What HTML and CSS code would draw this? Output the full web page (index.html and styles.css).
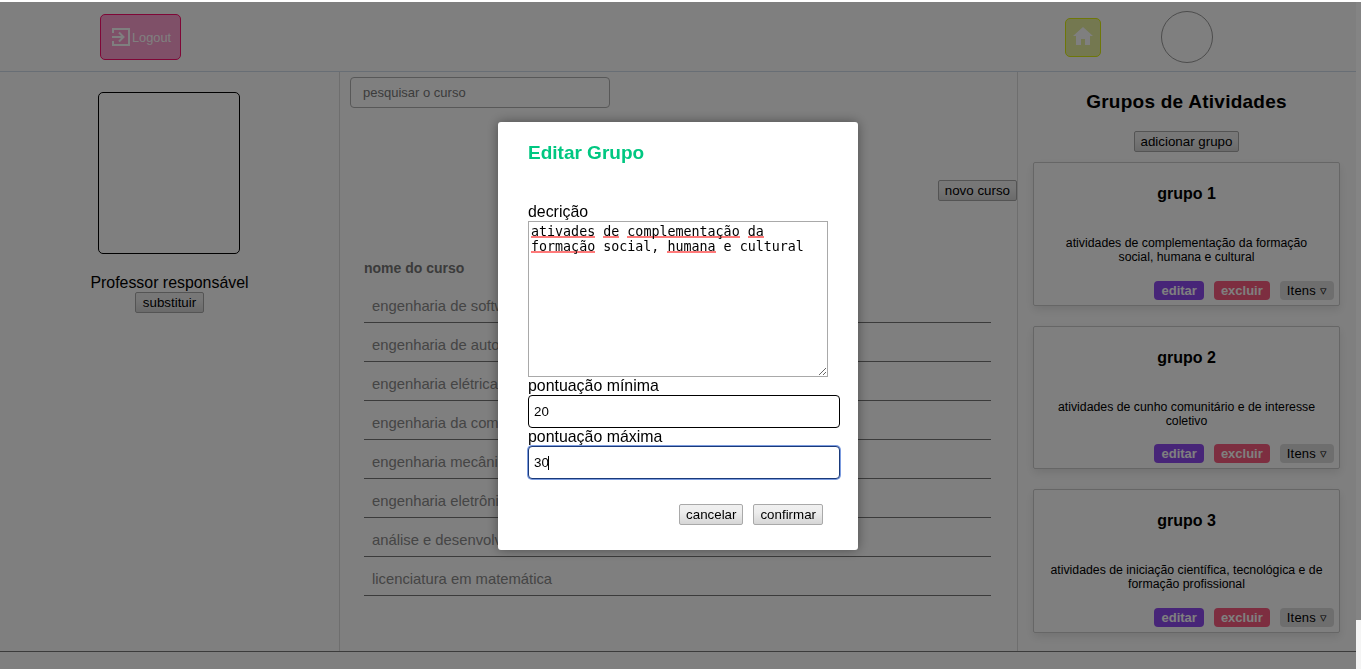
FILE: index.html
```html
<!DOCTYPE html>
<html>
  <head>
    <meta name="viewport" content="width=device-width, initial-scale=1.0" />
    <title>Editar Grupo</title>
    <link rel="stylesheet" href="styles.css">
  </head>
  <body>
    <div class="page">
      <header class="topbar">
        <div class="topbar-left">
          <button class="logout-button">
            <svg class="logout-icon" width="20" height="20" viewBox="0 0 20 20" fill="none" stroke="#fff" stroke-width="2">
              <path d="M2 6V2h16v16H2v-4" />
              <path d="M1 10h11M8 5.500l4.500 4.500-4.500 4.500" />
            </svg>
            Logout
          </button>
        </div>
        <div class="topbar-right">
          <button class="home-button">
            <svg width="20" height="18" viewBox="0 0 20 18" fill="#fff">
              <path d="M10 0L0 9h3v9h5v-6h4v6h5V9h3z" />
            </svg>
          </button>
          <div class="avatar"></div>
        </div>
      </header>

      <main class="columns">
        <aside class="teacher-col">
          <div class="teacher-photo"></div>
          <div class="teacher-label">Professor responsável</div>
          <button class="plain-button">substituir</button>
        </aside>

        <section class="course-col">
          <input class="search-input" type="text" placeholder="pesquisar o curso" />
          <div class="new-course-row">
            <button class="plain-button">novo curso</button>
          </div>
          <div class="course-list">
            <div class="course-head">nome do curso</div>
            <div class="course-row">engenharia de software</div>
            <div class="course-row">engenharia de automação</div>
            <div class="course-row">engenharia elétrica-eletrônica</div>
            <div class="course-row">engenharia da computação</div>
            <div class="course-row">engenharia mecânica</div>
            <div class="course-row">engenharia eletrônica</div>
            <div class="course-row">análise e desenvolvimento de sistemas</div>
            <div class="course-row">licenciatura em matemática</div>
          </div>
        </section>

        <aside class="groups-col">
          <h2 class="groups-title">Grupos de Atividades</h2>
          <button class="plain-button add-group">adicionar grupo</button>

          <div class="group-card">
            <h3 class="group-name">grupo 1</h3>
            <p class="group-text">atividades de complementação da formação social, humana e cultural</p>
            <div class="group-actions">
              <span class="tag tag-edit">editar</span>
              <span class="tag tag-delete">excluir</span>
              <span class="tag tag-items">Itens ▿</span>
            </div>
          </div>

          <div class="group-card">
            <h3 class="group-name">grupo 2</h3>
            <p class="group-text">atividades de cunho comunitário e de interesse coletivo</p>
            <div class="group-actions">
              <span class="tag tag-edit">editar</span>
              <span class="tag tag-delete">excluir</span>
              <span class="tag tag-items">Itens ▿</span>
            </div>
          </div>

          <div class="group-card">
            <h3 class="group-name">grupo 3</h3>
            <p class="group-text">atividades de iniciação científica, tecnológica e de formação profissional</p>
            <div class="group-actions">
              <span class="tag tag-edit">editar</span>
              <span class="tag tag-delete">excluir</span>
              <span class="tag tag-items">Itens ▿</span>
            </div>
          </div>
        </aside>
      </main>

      <footer class="bottom-line"></footer>
    </div>

    <div class="overlay"></div>
    <div class="gutter"></div>
    <div class="corner-patch"></div>

    <div class="modal">
      <h2 class="modal-title">Editar Grupo</h2>
      <label class="modal-label">decrição</label>
      <div class="modal-textarea"><span class="typo">ativades</span> <span class="typo">de</span> <span class="typo">complementação</span> <span class="typo">da</span> <span class="typo">formação</span> social, <span class="typo">humana</span> e cultural</div>
      <label class="modal-label">pontuação mínima</label>
      <input class="modal-input" type="text" value="20" />
      <label class="modal-label">pontuação máxima</label>
      <div class="input-wrap">
        <input class="modal-input is-focused" type="text" value="30" />
        <span class="caret"></span>
      </div>
      <div class="modal-actions">
        <button class="plain-button modal-button">cancelar</button>
        <button class="plain-button modal-button">confirmar</button>
      </div>
    </div>
  </body>
</html>
```

FILE: styles.css
```css
* {
  box-sizing: border-box;
}

html,
body {
  height: 100%;
  margin: 0;
  overflow: hidden;
}

body {
  font-family: "Liberation Sans", Arial, sans-serif;
  background-color: #fff;
  color: #000;
}

.page {
  width: 1356px;
  height: 669px;
  display: flex;
  flex-direction: column;
  padding-top: 2px;
}

.topbar {
  height: 70px;
  flex: none;
  display: flex;
  justify-content: space-between;
  border-bottom: 1px solid #d0dcea;
}

.topbar-left {
  padding: 12px 0 0 100px;
}

.logout-button {
  width: 81px;
  height: 46px;
  display: flex;
  align-items: center;
  gap: 1px;
  padding: 0 0 0 10px;
  background-color: #ffa0d0;
  border: 1px solid #ff0f6e;
  border-radius: 5px;
  color: #fff;
  font-family: inherit;
  font-size: 12.8px;
}

.topbar-right {
  display: flex;
  align-items: flex-start;
  padding: 9px 143px 0 0;
}

.home-button {
  width: 36px;
  height: 39px;
  margin: 7px 60px 0 0;
  padding: 0;
  background-color: #e8f0a0;
  border: 1px solid #dcef10;
  border-radius: 5px;
}

.avatar {
  width: 52px;
  height: 52px;
  border: 1px solid #999;
  border-radius: 50%;
}

.columns {
  flex: 1;
  min-height: 0;
  display: flex;
}

.teacher-col {
  width: 340px;
  flex: none;
  display: flex;
  flex-direction: column;
  align-items: center;
  border-right: 1px solid #ddd;
  padding-top: 20px;
}

.teacher-photo {
  width: 142px;
  height: 162px;
  margin-right: 1px;
  border: 1px solid #000;
  border-radius: 5px;
}

.teacher-label {
  margin-top: 20px;
  font-size: 15.9px;
  line-height: 18px;
}

.plain-button {
  height: 21px;
  flex: none;
  padding: 0 6px;
  background: linear-gradient(#f0f0f0, #ededed 38%, #d6d6d6);
  border: 1px solid #a9a9a9;
  border-radius: 2px;
  font-family: inherit;
  font-size: 13.333px;
  color: #000;
}

.teacher-col .plain-button {
  padding: 0 7px;
}

.course-col {
  flex: 1;
  min-width: 0;
  padding: 5px 0 0 10px;
  border-right: 1px solid #ddd;
}

.search-input {
  display: block;
  width: 260px;
  height: 31px;
  padding: 0 12px;
  border: 1px solid #b0b0b0;
  border-radius: 4px;
  font-family: inherit;
  font-size: 13px;
}

.search-input::placeholder {
  color: #777;
}

.new-course-row {
  display: flex;
  justify-content: flex-end;
  margin-top: 72px;
}

.course-list {
  margin: 57px 26px 0 14px;
}

.course-head {
  font-size: 14px;
  font-weight: bold;
  line-height: 20px;
  color: #777;
  margin-bottom: 6px;
}

.course-row {
  height: 39px;
  padding: 12px 0 0 8px;
  font-size: 14.8px;
  line-height: 20px;
  color: #8a8a8a;
  border-bottom: 1px solid #777;
}

.groups-col {
  width: 338px;
  flex: none;
  display: flex;
  flex-direction: column;
  align-items: center;
  padding: 0 16px 0 15px;
}

.groups-title {
  flex: none;
  margin: 19px 0 18px;
  font-size: 19px;
  line-height: 22px;
  letter-spacing: 0.25px;
}

.add-group {
  margin-bottom: 10px;
}

.group-card {
  width: 307px;
  height: 143.5px;
  margin-bottom: 20px;
  padding: 0 5px 5px;
  display: flex;
  flex-direction: column;
  flex: none;
  border: 1px solid #ccc;
  border-radius: 2px;
  box-shadow: 0 4px 10px rgba(0, 0, 0, 0.1);
}

.group-name {
  margin: 21px 0 0;
  font-size: 16px;
  line-height: 20px;
  text-align: center;
}

.group-text {
  margin: 32px 10px 0;
  font-size: 12.3px;
  line-height: 14px;
  text-align: center;
}

.group-actions {
  margin-top: auto;
  display: flex;
  justify-content: flex-end;
  gap: 10px;
}

.tag {
  height: 19px;
  padding: 0 7px;
  border-radius: 4px;
  font-size: 13px;
  line-height: 19px;
}

.tag-edit {
  background-color: #8f4bf0;
  color: #fff;
  font-weight: bold;
}

.tag-delete {
  background-color: #fa5c80;
  color: #fff;
  font-weight: bold;
}

.tag-items {
  background-color: #ddd;
  letter-spacing: 0.2px;
}

.bottom-line {
  height: 18px;
  flex: none;
  border-top: 1px solid #777;
}

.overlay {
  position: fixed;
  inset: 2px 0 0 0;
  background-color: rgba(0, 0, 0, 0.5);
}

.gutter {
  position: fixed;
  top: 2px;
  right: 0;
  bottom: 0;
  width: 5px;
  background-color: rgba(255, 255, 255, 0.04);
}

.corner-patch {
  position: fixed;
  right: 0;
  bottom: 0;
  width: 5px;
  height: 49px;
  background-color: #f4f4f4;
}

.modal {
  position: fixed;
  left: 498px;
  top: 122px;
  width: 360px;
  height: 428px;
  padding: 20px 30px 0;
  background-color: #fff;
  border-radius: 3px;
  box-shadow: 0 0 12px rgba(0, 0, 0, 0.4);
}

.modal-title {
  margin: 0 0 39px;
  font-size: 19px;
  line-height: 22px;
  color: #00c781;
}

.modal-label {
  display: block;
  font-size: 15.9px;
  line-height: 18px;
}

.modal-textarea {
  width: 300px;
  height: 156px;
  padding: 2px;
  border: 1px solid #a9a9a9;
  overflow: auto;
  resize: both;
  font-family: "DejaVu Sans Mono", monospace;
  font-size: 13.333px;
  line-height: 15px;
}

/* spell check squiggle, small zigzag under the word */
.typo {
  background-image: radial-gradient(circle at 50% 50%, #f77 0, #f77 0.7px, transparent 1px);
  background-size: 2px 2px;
  background-position: 0 calc(100% - 1px);
  background-repeat: repeat-x;
}

.input-wrap {
  position: relative;
}

.caret {
  position: absolute;
  left: 20px;
  top: 10px;
  width: 1px;
  height: 14px;
  background-color: #000;
}

.modal-input {
  display: block;
  width: 312px;
  height: 33px;
  padding: 0 5px;
  border: 1px solid #000;
  border-radius: 4px;
  font-family: inherit;
  font-size: 13.333px;
}

.modal-input.is-focused {
  border-color: #1a3a7a;
  box-shadow: 0 0 0 1px #7c9ce0;
}

.modal-actions {
  display: flex;
  justify-content: flex-end;
  gap: 10px;
  width: 295px;
  margin-top: 25px;
}
```
